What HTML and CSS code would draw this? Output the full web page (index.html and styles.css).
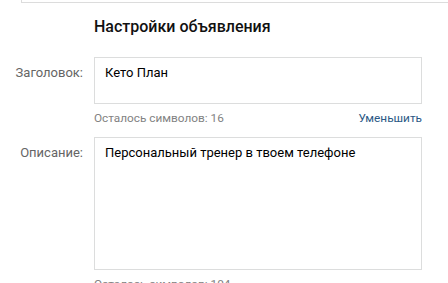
FILE: index.html
```html
<!DOCTYPE html>
<html lang="ru">
<head>
<meta charset="utf-8">
<link rel="stylesheet" href="styles.css">
</head>
<body>
<div class="top-box"></div>
<div class="settings">
  <h2 class="title">Настройки объявления</h2>
  <div class="row">
    <div class="label">Заголовок:</div>
    <div class="field">
      <div class="input input-title">Кето План</div>
      <div class="hint">
        <span>Осталось символов: 16</span>
        <a class="link" href="#">Уменьшить</a>
      </div>
    </div>
  </div>
  <div class="row">
    <div class="label">Описание:</div>
    <div class="field">
      <div class="input input-desc">Персональный тренер в твоем телефоне</div>
      <div class="hint">
        <span>Осталось символов: 104</span>
      </div>
    </div>
  </div>
</div>
</body>
</html>
```
FILE: styles.css
```css
html, body {
  margin: 0;
  padding: 0;
  background: #fff;
  overflow: hidden;
}
body {
  font-family: Roboto, "Open Sans", "Liberation Sans", sans-serif;
  font-size: 13px;
  color: #000;
  width: 448px;
  height: 283px;
}
.top-box {
  margin-left: 21px;
  height: 3px;
  box-sizing: border-box;
  border-left: 1px solid #dcdcdc;
  border-bottom: 1px solid #dcdcdc;
}
.settings {
  padding-top: 13px;
}
.title {
  margin: 0 0 20px 94px;
  font-size: 16px;
  font-weight: 500;
  line-height: 21px;
  color: #111;
}
.row {
  display: grid;
  grid-template-columns: 94px 328px;
}
.label {
  text-align: right;
  padding-right: 11px;
  padding-top: 7px;
  line-height: 17px;
  color: #656565;
}
.input {
  box-sizing: border-box;
  border: 1px solid #dcdddd;
  padding: 6px 10px;
  line-height: 17px;
  font-size: 13px;
  color: #000;
}
.input-title {
  height: 47px;
}
.input-desc {
  height: 133px;
}
.hint {
  display: flex;
  justify-content: space-between;
  margin-top: 6px;
  margin-bottom: 11px;
  font-size: 11.8px;
  line-height: 16px;
  color: #828282;
}
.link {
  color: #2a5885;
  text-decoration: none;
}
```
